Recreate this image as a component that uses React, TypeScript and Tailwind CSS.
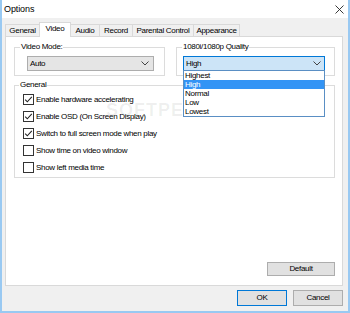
import React from "react";

function Check({ checked }: { checked: boolean }) {
  return (
    <svg width="11" height="11" viewBox="0 0 11 11" className="shrink-0">
      <rect x="0.5" y="0.5" width="10" height="10" fill="#fff" stroke="#333" />
      {checked && (
        <path d="M2.2 5.6 L4.3 7.8 L8.8 2.9" fill="none" stroke="#222" strokeWidth="1.1" />
      )}
    </svg>
  );
}

function Chevron() {
  return (
    <svg width="8" height="5" viewBox="0 0 8 5" className="shrink-0">
      <path d="M0.5 0.5 L4 4 L7.5 0.5" fill="none" stroke="#444" strokeWidth="1" />
    </svg>
  );
}

function Tab({ label, w, selected }: { label: string; w: string; selected?: boolean }) {
  return selected ? (
    <div
      className={`${w} h-[15px] -mb-px -ml-px relative z-10 bg-white border-x border-t border-[#d9d9d9] flex items-center justify-center pb-[2px]`}
    >
      {label}
    </div>
  ) : (
    <div
      className={`${w} h-[12px] -ml-px first:ml-0 bg-[#f0f0f0] border-x border-t border-[#d9d9d9] flex items-center justify-center`}
    >
      {label}
    </div>
  );
}

const options = ["Highest", "High", "Normal", "Low", "Lowest"];
const checks: [string, boolean][] = [
  ["Enable hardware accelerating", true],
  ["Enable OSD (On Screen Display)", true],
  ["Switch to full screen mode when play", true],
  ["Show time on video window", false],
  ["Show left media time", false],
];

export default function App() {
  return (
    <div className="w-[350px] h-[313px] bg-[#f0f0f0] border-x-2 border-b-2 border-[#99c9f2] flex flex-col text-[8px] tracking-[-0.3px] text-black font-['Liberation_Sans',Arial,sans-serif] leading-none overflow-hidden">
      {/* Title bar */}
      <div className="h-[18px] bg-white flex items-center justify-between pl-[2px] pr-[4px] shrink-0">
        <span className="text-[9px] tracking-[-0.1px]">Options</span>
        <svg width="9" height="9" viewBox="0 0 9 9">
          <path d="M0.5 0.5 L8.5 8.5 M8.5 0.5 L0.5 8.5" stroke="#222" strokeWidth="0.9" />
        </svg>
      </div>

      {/* Tabs */}
      <div className="h-[18px] flex items-end pl-[3px] shrink-0">
        <Tab label="General" w="w-[35px]" />
        <Tab label="Video" w="w-[32px]" selected />
        <Tab label="Audio" w="w-[30px]" />
        <Tab label="Record" w="w-[34px]" />
        <Tab label="Parental Control" w="w-[62px]" />
        <Tab label="Appearance" w="w-[47px]" />
      </div>

      {/* Panel */}
      <div className="ml-[3px] mr-[5px] h-[250px] shrink-0 bg-white border border-[#d9d9d9] relative flex flex-col pl-[8px] pr-[7px] pt-[5px]">
        <div className="absolute left-[100px] top-[64px] text-[18px] font-bold tracking-[1px] text-black/[0.07] pointer-events-none">
          SOFTPEDIA<sup className="text-[7px] align-top">®</sup>
        </div>

        <div className="flex gap-[11px]">
          <fieldset className="w-[151px] border border-[#dcdcdc] pb-[4px]">
            <legend className="ml-[5px] px-[1px] leading-[10px]">Video Mode:</legend>
            <div className="ml-[12px] mt-[4px] w-[127px] h-[15px] bg-[#e5e5e5] border border-[#adadad] flex items-center justify-between pl-[2px] pr-[4px]">
              <span>Auto</span>
              <Chevron />
            </div>
          </fieldset>
          <fieldset className="w-[159px] border border-[#dcdcdc] pb-[4px]">
            <legend className="ml-[5px] px-[1px] leading-[10px]">1080i/1080p Quality</legend>
            <div className="ml-[6px] mt-[4px] w-[142px] h-[15px] relative z-20">
              <div className="h-full bg-[#cce4f7] border border-[#0078d7] flex items-center justify-between pl-[2px] pr-[3px]">
                <span>High</span>
                <Chevron />
              </div>
              <div className="absolute left-0 top-[14px] w-full bg-white border border-[#5a8fc4] flex flex-col">
                {options.map((o) => (
                  <div
                    key={o}
                    className={`h-[9px] flex items-center pl-[1px] ${o === "High" ? "bg-[#3394f5] text-white" : ""}`}
                  >
                    {o}
                  </div>
                ))}
              </div>
            </div>
          </fieldset>
        </div>

        <fieldset className="mt-[4px] w-[321px] border border-[#dcdcdc] pb-[1px]">
          <legend className="ml-[4px] px-[1px] leading-[10px]">General</legend>
          <div className="mt-[1px] pl-[8px] flex flex-col">
            {checks.map(([label, c]) => (
              <div key={label} className="h-[17px] flex items-center gap-[2px]">
                <Check checked={c} />
                <span>{label}</span>
              </div>
            ))}
          </div>
        </fieldset>

        <div className="flex-1" />
        <div className="flex justify-end pr-[-1px] mb-[9px]">
          <div className="w-[68px] h-[14px] bg-[#e1e1e1] border border-[#adadad] flex items-center justify-center">
            Default
          </div>
        </div>
      </div>

      {/* Bottom buttons */}
      <div className="flex-1 flex justify-end items-start gap-[6px] pt-[4px] pr-[5px]">
        <div className="w-[50px] h-[16px] bg-[#e1e1e1] border border-[#0078d7] flex items-center justify-center">
          OK
        </div>
        <div className="w-[50px] h-[16px] bg-[#e1e1e1] border border-[#adadad] flex items-center justify-center">
          Cancel
        </div>
      </div>
    </div>
  );
}
